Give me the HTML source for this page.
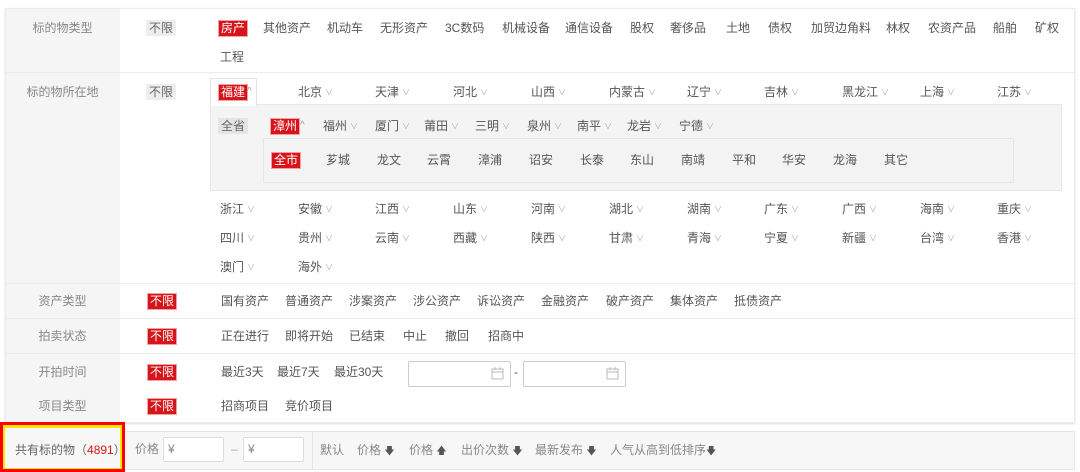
<!DOCTYPE html>
<html><head><meta charset="utf-8">
<style>
*{margin:0;padding:0;box-sizing:border-box}
body{width:1080px;height:472px;background:#fff;position:relative;overflow:hidden;font-family:"Liberation Sans","Noto Sans CJK SC",sans-serif;font-size:12px;color:#555}
.a{position:absolute;white-space:nowrap;line-height:16px}
.t{position:absolute;white-space:nowrap;line-height:16px;color:#555}
.lab{position:absolute;color:#888;width:115px;text-align:center;left:5px;line-height:16px}
.r{background:#d8141b;color:#fff;padding:0 2px;border:1px solid #f2a0a0;line-height:15px}
.g{background:#eee;color:#666;padding:0 3px}
.hl{position:absolute;left:5px;width:1070px;height:1px;background:#ececec}
.ch{color:#aaa;font-size:8px;margin-left:3px;vertical-align:1px}
.inp{position:absolute;border:1px solid #ccc;border-radius:2px;background:#fff}
</style></head><body>
<div style="position:absolute;left:5px;top:8px;width:1070px;height:415px;border:1px solid #ececec;box-shadow:0 1px 2px #ddd"></div>
<div style="position:absolute;left:6px;top:9px;width:114px;height:413px;background:#f5f5f5"></div>
<div class="hl" style="top:72px"></div>
<div class="hl" style="top:283px"></div>
<div class="hl" style="top:318px"></div>
<div class="hl" style="top:353px"></div>

<div class="lab" style="top:20px">标的物类型</div>
<span class="a g" style="left:146px;top:20px">不限</span>
<span class="a r" style="left:218px;top:20px">房产</span>
<span class="t" style="left:263px;top:20px">其他资产</span>
<span class="t" style="left:327px;top:20px">机动车</span>
<span class="t" style="left:380px;top:20px">无形资产</span>
<span class="t" style="left:445px;top:20px">3C数码</span>
<span class="t" style="left:502px;top:20px">机械设备</span>
<span class="t" style="left:565px;top:20px">通信设备</span>
<span class="t" style="left:630px;top:20px">股权</span>
<span class="t" style="left:670px;top:20px">奢侈品</span>
<span class="t" style="left:726px;top:20px">土地</span>
<span class="t" style="left:768px;top:20px">债权</span>
<span class="t" style="left:811px;top:20px">加贸边角料</span>
<span class="t" style="left:886px;top:20px">林权</span>
<span class="t" style="left:928px;top:20px">农资产品</span>
<span class="t" style="left:993px;top:20px">船舶</span>
<span class="t" style="left:1035px;top:20px">矿权</span>
<span class="t" style="left:220px;top:49px">工程</span>

<div class="lab" style="top:84px">标的物所在地</div>
<span class="a g" style="left:146px;top:84px">不限</span>
<div style="position:absolute;left:210px;top:104px;width:852px;height:87px;background:#f4f4f4;border:1px solid #e8e8e8"></div>
<div style="position:absolute;left:210px;top:78px;width:47px;height:28px;background:#fff;border:1px solid #e4e4e4;border-bottom:none"></div>
<span class="a r" style="left:218px;top:84px">福建</span><span class="a" style="left:247px;top:84px;color:#999;font-size:10px">^</span>
<span class="t" style="left:298px;top:84px">北京<span class="ch">∨</span></span>
<span class="t" style="left:375px;top:84px">天津<span class="ch">∨</span></span>
<span class="t" style="left:453px;top:84px">河北<span class="ch">∨</span></span>
<span class="t" style="left:531px;top:84px">山西<span class="ch">∨</span></span>
<span class="t" style="left:609px;top:84px">内蒙古<span class="ch">∨</span></span>
<span class="t" style="left:687px;top:84px">辽宁<span class="ch">∨</span></span>
<span class="t" style="left:764px;top:84px">吉林<span class="ch">∨</span></span>
<span class="t" style="left:842px;top:84px">黑龙江<span class="ch">∨</span></span>
<span class="t" style="left:920px;top:84px">上海<span class="ch">∨</span></span>
<span class="t" style="left:997px;top:84px">江苏<span class="ch">∨</span></span>

<span class="a g" style="left:218px;top:118px;background:#e4e4e4">全省</span>
<span class="a r" style="left:270px;top:118px">漳州</span><span class="a" style="left:300px;top:118px;color:#999;font-size:10px">^</span>
<span class="t" style="left:323px;top:118px">福州<span class="ch">∨</span></span>
<span class="t" style="left:375px;top:118px">厦门<span class="ch">∨</span></span>
<span class="t" style="left:424px;top:118px">莆田<span class="ch">∨</span></span>
<span class="t" style="left:475px;top:118px">三明<span class="ch">∨</span></span>
<span class="t" style="left:527px;top:118px">泉州<span class="ch">∨</span></span>
<span class="t" style="left:577px;top:118px">南平<span class="ch">∨</span></span>
<span class="t" style="left:627px;top:118px">龙岩<span class="ch">∨</span></span>
<span class="t" style="left:679px;top:118px">宁德<span class="ch">∨</span></span>

<div style="position:absolute;left:263px;top:138px;width:751px;height:45px;background:#f3f3f3;border:1px solid #e6e6e6"></div>
<span class="a r" style="left:271px;top:152px">全市</span>
<span class="t" style="left:326px;top:152px">芗城</span>
<span class="t" style="left:377px;top:152px">龙文</span>
<span class="t" style="left:427px;top:152px">云霄</span>
<span class="t" style="left:478px;top:152px">漳浦</span>
<span class="t" style="left:529px;top:152px">诏安</span>
<span class="t" style="left:580px;top:152px">长泰</span>
<span class="t" style="left:630px;top:152px">东山</span>
<span class="t" style="left:681px;top:152px">南靖</span>
<span class="t" style="left:732px;top:152px">平和</span>
<span class="t" style="left:782px;top:152px">华安</span>
<span class="t" style="left:833px;top:152px">龙海</span>
<span class="t" style="left:884px;top:152px">其它</span>

<span class="t" style="left:220px;top:201px">浙江<span class="ch">∨</span></span>
<span class="t" style="left:298px;top:201px">安徽<span class="ch">∨</span></span>
<span class="t" style="left:375px;top:201px">江西<span class="ch">∨</span></span>
<span class="t" style="left:453px;top:201px">山东<span class="ch">∨</span></span>
<span class="t" style="left:531px;top:201px">河南<span class="ch">∨</span></span>
<span class="t" style="left:609px;top:201px">湖北<span class="ch">∨</span></span>
<span class="t" style="left:687px;top:201px">湖南<span class="ch">∨</span></span>
<span class="t" style="left:764px;top:201px">广东<span class="ch">∨</span></span>
<span class="t" style="left:842px;top:201px">广西<span class="ch">∨</span></span>
<span class="t" style="left:920px;top:201px">海南<span class="ch">∨</span></span>
<span class="t" style="left:997px;top:201px">重庆<span class="ch">∨</span></span>
<span class="t" style="left:220px;top:230px">四川<span class="ch">∨</span></span>
<span class="t" style="left:298px;top:230px">贵州<span class="ch">∨</span></span>
<span class="t" style="left:375px;top:230px">云南<span class="ch">∨</span></span>
<span class="t" style="left:453px;top:230px">西藏<span class="ch">∨</span></span>
<span class="t" style="left:531px;top:230px">陕西<span class="ch">∨</span></span>
<span class="t" style="left:609px;top:230px">甘肃<span class="ch">∨</span></span>
<span class="t" style="left:687px;top:230px">青海<span class="ch">∨</span></span>
<span class="t" style="left:764px;top:230px">宁夏<span class="ch">∨</span></span>
<span class="t" style="left:842px;top:230px">新疆<span class="ch">∨</span></span>
<span class="t" style="left:920px;top:230px">台湾<span class="ch">∨</span></span>
<span class="t" style="left:997px;top:230px">香港<span class="ch">∨</span></span>
<span class="t" style="left:220px;top:259px">澳门<span class="ch">∨</span></span>
<span class="t" style="left:298px;top:259px">海外<span class="ch">∨</span></span>

<div class="lab" style="top:293px">资产类型</div>
<span class="a r" style="left:147px;top:293px">不限</span>
<span class="t" style="left:221px;top:293px">国有资产</span>
<span class="t" style="left:285px;top:293px">普通资产</span>
<span class="t" style="left:349px;top:293px">涉案资产</span>
<span class="t" style="left:413px;top:293px">涉公资产</span>
<span class="t" style="left:477px;top:293px">诉讼资产</span>
<span class="t" style="left:541px;top:293px">金融资产</span>
<span class="t" style="left:606px;top:293px">破产资产</span>
<span class="t" style="left:670px;top:293px">集体资产</span>
<span class="t" style="left:734px;top:293px">抵债资产</span>

<div class="lab" style="top:328px">拍卖状态</div>
<span class="a r" style="left:147px;top:328px">不限</span>
<span class="t" style="left:221px;top:328px">正在进行</span>
<span class="t" style="left:285px;top:328px">即将开始</span>
<span class="t" style="left:349px;top:328px">已结束</span>
<span class="t" style="left:403px;top:328px">中止</span>
<span class="t" style="left:445px;top:328px">撤回</span>
<span class="t" style="left:488px;top:328px">招商中</span>

<div class="lab" style="top:364px">开拍时间</div>
<span class="a r" style="left:147px;top:364px">不限</span>
<span class="t" style="left:221px;top:364px">最近3天</span>
<span class="t" style="left:277px;top:364px">最近7天</span>
<span class="t" style="left:334px;top:364px">最近30天</span>
<div class="inp" style="left:408px;top:361px;width:103px;height:26px"></div>
<span class="t" style="left:514px;top:364px">-</span>
<div class="inp" style="left:523px;top:361px;width:103px;height:26px"></div>
<svg style="position:absolute;left:491px;top:367px" width="13" height="13"><rect x="1" y="2" width="11" height="10" fill="none" stroke="#bbb"/><line x1="1" y1="5" x2="12" y2="5" stroke="#bbb"/><line x1="4" y1="0" x2="4" y2="3" stroke="#bbb"/><line x1="9" y1="0" x2="9" y2="3" stroke="#bbb"/></svg>
<svg style="position:absolute;left:606px;top:367px" width="13" height="13"><rect x="1" y="2" width="11" height="10" fill="none" stroke="#bbb"/><line x1="1" y1="5" x2="12" y2="5" stroke="#bbb"/><line x1="4" y1="0" x2="4" y2="3" stroke="#bbb"/><line x1="9" y1="0" x2="9" y2="3" stroke="#bbb"/></svg>

<div class="lab" style="top:398px">项目类型</div>
<span class="a r" style="left:147px;top:398px">不限</span>
<span class="t" style="left:221px;top:398px">招商项目</span>
<span class="t" style="left:285px;top:398px">竞价项目</span>

<div style="position:absolute;left:5px;top:431px;width:1070px;height:39px;background:#f7f7f7;border:1px solid #e8e8e8"></div>
<div style="position:absolute;left:0;top:422px;width:125px;height:50px;border:3px solid #f00;background:#ffe600"></div>
<div style="position:absolute;left:5px;top:428px;width:115px;height:40px;background:#f7f7f7"></div>
<span class="a" style="left:15px;top:442px;color:#666">共有标的物（<span style="color:#d8141b">4891</span>）</span>
<span class="a" style="left:135px;top:441px;color:#888">价格</span>
<div class="inp" style="left:163px;top:437px;width:61px;height:25px;border-color:#ddd"></div>
<span class="a" style="left:168px;top:441px;color:#888">¥</span>
<span class="a" style="left:231px;top:441px;color:#aaa">–</span>
<div class="inp" style="left:243px;top:437px;width:61px;height:25px;border-color:#ddd"></div>
<span class="a" style="left:248px;top:441px;color:#888">¥</span>
<div style="position:absolute;left:312px;top:432px;width:1px;height:37px;background:#e4e4e4"></div>
<span class="a" style="left:320px;top:442px;color:#888">默认</span>
<span class="a" style="left:357px;top:442px;color:#888">价格 <span style="color:#555;font-size:10px">🡇</span></span>
<span class="a" style="left:409px;top:442px;color:#888">价格 <span style="color:#555;font-size:10px">🡅</span></span>
<span class="a" style="left:461px;top:442px;color:#888">出价次数 <span style="color:#555;font-size:10px">🡇</span></span>
<span class="a" style="left:535px;top:442px;color:#888">最新发布 <span style="color:#555;font-size:10px">🡇</span></span>
<span class="a" style="left:610px;top:442px;color:#888">人气从高到低排序<span style="color:#555;font-size:10px">🡇</span></span>
</body></html>
